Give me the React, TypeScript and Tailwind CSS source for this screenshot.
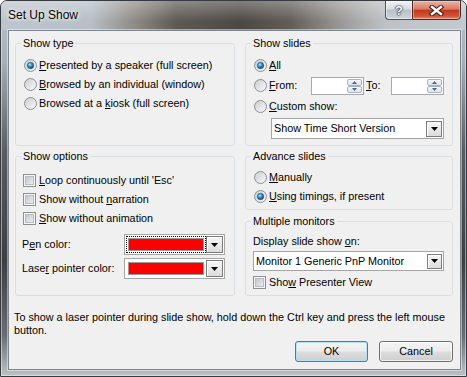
import React from "react";

function U({ children }: { children: React.ReactNode }) {
  return <span className="underline decoration-1 underline-offset-[1px]">{children}</span>;
}

function Radio({ checked }: { checked?: boolean }) {
  return (
    <svg width="13" height="13" viewBox="0 0 13 13" className="shrink-0 block">
      <defs>
        <linearGradient id="rgrad" x1="0" y1="0" x2="1" y2="1">
          <stop offset="0" stopColor="#c9ccd0" />
          <stop offset="1" stopColor="#fbfbfb" />
        </linearGradient>
        <radialGradient id="rdot" cx="40%" cy="35%" r="65%">
          <stop offset="0" stopColor="#bfe9fc" />
          <stop offset="0.45" stopColor="#3596d6" />
          <stop offset="1" stopColor="#17466f" />
        </radialGradient>
      </defs>
      <circle cx="6.5" cy="6.5" r="6" fill="url(#rgrad)" stroke="#8e8f8f" strokeWidth="1" />
      {checked && <circle cx="6.5" cy="6.5" r="3.2" fill="url(#rdot)" stroke="#1f4f7a" strokeWidth="0.6" />}
    </svg>
  );
}

function Check() {
  return (
    <span className="block w-[13px] h-[13px] shrink-0 border border-[#8e8f8f] bg-[#f6f6f6] p-[1px]">
      <span className="block w-full h-full border border-[#b9bdc2] bg-[linear-gradient(135deg,#c3c7cc,#eceef0)]" />
    </span>
  );
}

function Tri() {
  return (
    <svg width="7" height="4" viewBox="0 0 7 4" className="block">
      <path d="M0 0H7L3.5 4Z" fill="#000" />
    </svg>
  );
}

function DropBtn({ cls }: { cls: string }) {
  return (
    <span
      className={
        "flex items-center justify-center shrink-0 border border-[#7c7c7c] bg-[linear-gradient(to_bottom,#f7f7f7,#dcdcdc)] shadow-[inset_1px_1px_0_#ffffff] " +
        cls
      }
    >
      <Tri />
    </span>
  );
}

function SpinHalf({ up }: { up?: boolean }) {
  return (
    <span className="flex-1 flex items-center justify-center border border-[#a9b4c1] rounded-[2px] bg-[linear-gradient(to_bottom,#f6f8fa,#dde3ea)]">
      <svg width="5" height="3" viewBox="0 0 5 3" className="block">
        <path d={up ? "M0 3H5L2.5 0Z" : "M0 0H5L2.5 3Z"} fill="#4d668e" />
      </svg>
    </span>
  );
}

function Spin() {
  return (
    <span className="flex w-[53px] h-[18px] border border-[#a7abb0] bg-white justify-end p-[0px]">
      <span className="flex flex-col w-[17px] h-full gap-0 p-[1px]">
        <SpinHalf up />
        <SpinHalf />
      </span>
    </span>
  );
}

function ColorCombo({ focus }: { focus?: boolean }) {
  return (
    <span className="flex items-center w-[101px] h-[21px] border border-[#a5a5a5] bg-white">
      <span
        className={
          "ml-[1px] p-[1px] border " + (focus ? "border-dotted border-black" : "border-transparent")
        }
      >
        <span className="block w-[76px] h-[13px] bg-[#ff0000] border border-[#9a9a9a]" />
      </span>
      <DropBtn cls="w-[17px] h-[17px]" />
    </span>
  );
}

function Group({
  title,
  children,
  cls,
}: {
  title: string;
  children: React.ReactNode;
  cls: string;
}) {
  return (
    <fieldset className="m-0 p-0 min-w-0 border border-[#d5dfe5] rounded-[3px]">
      <legend className="ml-[5px] px-[2px] leading-[13px]">{title}</legend>
      <div className={cls}>{children}</div>
    </fieldset>
  );
}

export default function App() {
  return (
    <div className="w-[467px] h-[377px] font-['Liberation_Sans',Arial,sans-serif] text-[10.8px] text-black">
      <div className="w-[467px] h-[377px] flex flex-col border border-[#353b41] rounded-t-[7px] overflow-hidden shadow-[inset_0_0_0_1px_rgba(255,255,255,0.45)] bg-[linear-gradient(to_bottom,#bcc4cc_0px,#a8afb6_60px,#5a5d60_150px,#3c3e40_260px,#6b6e71_335px,#b0b5ba_368px,#bcc1c6_100%)]">
        {/* Title bar */}
        <div className="h-[29px] shrink-0 flex items-start justify-between bg-[linear-gradient(to_bottom,rgba(255,255,255,0.3),rgba(255,255,255,0)_70%),linear-gradient(to_right,#bdc5cd_0px,#b7bfc7_90px,#8e8983_135px,#5f5953_175px,#4c4843_240px,#645d56_290px,#9b9997_340px,#bec2c6_385px,#c5cace_100%)]">
          <span className="ml-[7px] mt-[6px] leading-[16px] text-[12px] text-black [text-shadow:0_0_6px_#ffffff,0_0_3px_#ffffff]">
            Set Up Show
          </span>
          <div className="flex mr-[5px] -mt-[1px]">
            <span className="w-[27px] h-[20px] flex items-center justify-center border border-[#4a535b] border-r-0 rounded-bl-[4px] bg-[linear-gradient(to_bottom,#f0f3f6,#d6dbe0_45%,#b9c0c7_50%,#cdd3d9)] shadow-[inset_0_0_0_1px_rgba(255,255,255,0.55)] text-white font-bold text-[13px] leading-none [text-shadow:0_0_1px_#222,0_0_1px_#222,0_0_2px_#333]">
              ?
            </span>
            <span className="w-[49px] h-[20px] flex items-center justify-center border border-[#4a2620] rounded-br-[4px] bg-[linear-gradient(to_bottom,#ecb3a6,#da7a61_45%,#c3381d_52%,#d0553a_85%,#e48e76)] shadow-[inset_0_0_0_1px_rgba(255,220,210,0.45)]">
              <svg width="15" height="11" viewBox="0 0 15 11">
                <path d="M3 2L12 9M12 2L3 9" stroke="#3a1a14" strokeWidth="4.4" strokeLinecap="square" />
                <path d="M3 2L12 9M12 2L3 9" stroke="#ffffff" strokeWidth="2.4" strokeLinecap="square" />
              </svg>
            </span>
          </div>
        </div>

        {/* Client */}
        <div className="ml-[7px] w-[453px] h-[340px] shrink-0 border border-[#7d8790] shadow-[0_0_0_1px_rgba(255,255,255,0.45)] bg-[#f0f0f0] pt-[6px] pl-[6px] pr-[7px] flex flex-col">
          <div className="grid grid-cols-[220px_208px] gap-x-[10px] gap-y-[4px]">
            <Group title="Show type" cls="pl-[8px] pt-[6px]">
              <div className="flex items-center gap-[2px] h-[19px]">
                <Radio checked />
                <span>
                  <U>P</U>resented by a speaker (full screen)
                </span>
              </div>
              <div className="flex items-center gap-[2px] h-[19px]">
                <Radio />
                <span>
                  <U>B</U>rowsed by an individual (window)
                </span>
              </div>
              <div className="flex items-center gap-[2px] h-[19px]">
                <Radio />
                <span>
                  Browsed at a <U>k</U>iosk (full screen)
                </span>
              </div>
            </Group>

            <Group title="Show slides" cls="pl-[8px] pt-[6px] pb-[6px]">
              <div className="flex items-center gap-[2px] h-[19px]">
                <Radio checked />
                <span>
                  <U>A</U>ll
                </span>
              </div>
              <div className="flex items-center h-[21px]">
                <span className="flex items-center gap-[2px] w-[57px]">
                  <Radio />
                  <span>
                    <U>F</U>rom:
                  </span>
                </span>
                <Spin />
                <span className="w-[27px] pl-[2px]">
                  <U>T</U>o:
                </span>
                <Spin />
              </div>
              <div className="flex items-center gap-[2px] h-[21px]">
                <Radio />
                <span>
                  <U>C</U>ustom show:
                </span>
              </div>
              <div className="mt-[1px] ml-[17px] w-[173px] h-[21px] flex items-center justify-between border border-[#a5a5a5] bg-white pl-[2px] pr-[1px]">
                <span>Show Time Short Version</span>
                <DropBtn cls="w-[16px] h-[16px]" />
              </div>
            </Group>

            <Group title="Show options" cls="pl-[7px] pt-[8px]">
              <div className="flex items-center gap-[3px] h-[19px]">
                <Check />
                <span>
                  <U>L</U>oop continuously until 'Esc'
                </span>
              </div>
              <div className="flex items-center gap-[3px] h-[19px]">
                <Check />
                <span>
                  Show without <U>n</U>arration
                </span>
              </div>
              <div className="flex items-center gap-[3px] h-[19px]">
                <Check />
                <span>
                  <U>S</U>how without animation
                </span>
              </div>
              <div className="mt-[6px] flex items-center h-[21px]">
                <span className="w-[102px] -ml-[1px]">
                  P<U>e</U>n color:
                </span>
                <ColorCombo focus />
              </div>
              <div className="mt-[3px] flex items-center h-[21px]">
                <span className="w-[102px] -ml-[1px]">
                  Lase<U>r</U> pointer color:
                </span>
                <ColorCombo />
              </div>
            </Group>

            <div className="flex flex-col gap-[5px]">
              <Group title="Advance slides" cls="pl-[8px] pt-[5px] pb-[3px]">
                <div className="flex items-center gap-[2px] h-[19px]">
                  <Radio />
                  <span>
                    <U>M</U>anually
                  </span>
                </div>
                <div className="flex items-center gap-[2px] h-[19px]">
                  <Radio checked />
                  <span>
                    <U>U</U>sing timings, if present
                  </span>
                </div>
              </Group>
              <Group title="Multiple monitors" cls="pl-[7px] pt-[7px] pb-[3px]">
                <div className="leading-[13px]">
                  Display slide show <U>o</U>n:
                </div>
                <div className="mt-[3px] w-[191px] h-[20px] flex items-center justify-between border border-[#a5a5a5] bg-white pl-[2px] pr-[1px]">
                  <span>Monitor 1 Generic PnP Monitor</span>
                  <DropBtn cls="w-[15px] h-[15px]" />
                </div>
                <div className="mt-[2px] flex items-center gap-[3px] h-[19px]">
                  <Check />
                  <span>
                    Sho<U>w</U> Presenter View
                  </span>
                </div>
              </Group>
            </div>
          </div>

          <div className="mt-[15px] -ml-[1px] leading-[13px] whitespace-nowrap">
            To show a laser pointer during slide show, hold down the Ctrl key and press the left mouse
            <br />
            button.
          </div>

          <div className="mt-[4px] flex justify-end gap-[11px]">
            <button className="w-[73px] h-[21px] rounded-[3px] border border-[#3c7fb1] bg-[linear-gradient(to_bottom,#f4f4f4_0%,#ececec_48%,#dddddd_52%,#cfcfcf_100%)] shadow-[inset_0_0_0_1px_#b4e3f7] leading-none">
              OK
            </button>
            <button className="w-[74px] h-[21px] rounded-[3px] border border-[#707070] bg-[linear-gradient(to_bottom,#f4f4f4_0%,#ececec_48%,#dddddd_52%,#cfcfcf_100%)] shadow-[inset_0_0_0_1px_rgba(255,255,255,0.7)] leading-none">
              Cancel
            </button>
          </div>
        </div>
      </div>
    </div>
  );
}
